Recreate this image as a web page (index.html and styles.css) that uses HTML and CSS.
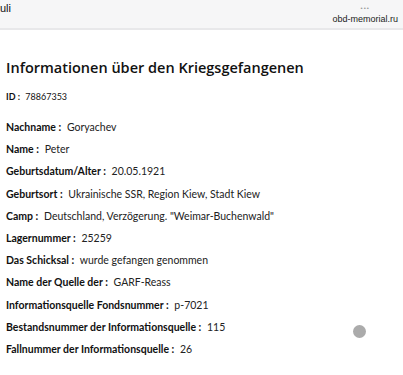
FILE: index.html
```html
<!DOCTYPE html>
<html lang="de">
<head>
<meta charset="utf-8">
<link rel="stylesheet" href="styles.css">
</head>
<body>
<header class="topbar">
  <span class="tab">uli</span>
  <div class="addr">
    <span class="dots">&bull;&bull;&bull;</span>
    <span class="url">obd-memorial.ru</span>
  </div>
</header>
<main class="content">
  <h1 class="title">Informationen über den Kriegsgefangenen</h1>
  <div class="id"><b>ID :</b> 78867353</div>
  <ul class="fields">
    <li><b>Nachname :</b> Goryachev</li>
    <li><b>Name :</b> Peter</li>
    <li><b>Geburtsdatum/Alter :</b> 20.05.1921</li>
    <li><b>Geburtsort :</b> Ukrainische SSR, Region Kiew, Stadt Kiew</li>
    <li><b>Camp :</b> Deutschland, Verzögerung. "Weimar-Buchenwald"</li>
    <li><b>Lagernummer :</b> 25259</li>
    <li><b>Das Schicksal :</b> wurde gefangen genommen</li>
    <li><b>Name der Quelle der :</b> GARF-Reass</li>
    <li><b>Informationsquelle Fondsnummer :</b> p-7021</li>
    <li><b>Bestandsnummer der Informationsquelle :</b> 115</li>
    <li><b>Fallnummer der Informationsquelle :</b> 26</li>
  </ul>
</main>
<div class="scroll-dot"></div>
</body>
</html>
```
FILE: styles.css
```css
html, body {
  margin: 0;
  padding: 0;
  background: #fff;
}
body {
  width: 403px;
  height: 375px;
  overflow: hidden;
  position: relative;
  font-family: Lato, "DejaVu Sans", sans-serif;
  color: #111;
}
.topbar {
  height: 28px;
  background: #f6f6f7;
  border-bottom: 2px solid #e8e8ea;
  display: flex;
  justify-content: space-between;
  align-items: flex-start;
  font-family: "Liberation Sans", Arial, sans-serif;
}
.tab {
  font-size: 11px;
  line-height: 12px;
  padding-top: 2px;
  color: #111;
}
.addr {
  display: flex;
  flex-direction: column;
  align-items: center;
  padding-right: 5px;
}
.dots {
  font-size: 6px;
  line-height: 8px;
  padding-top: 4px;
  color: #999;
  letter-spacing: 1px;
}
.url {
  font-size: 9px;
  line-height: 12px;
  margin-top: 1px;
  color: #222;
}
.content {
  padding: 27px 6px 0;
}
.title {
  margin: 0;
  font-family: "Open Sans", sans-serif;
  font-size: 14.5px;
  line-height: 22px;
  font-weight: 600;
  color: #111;
}
.id {
  margin-top: 12px;
  font-size: 9px;
  line-height: 12px;
  color: #111;
}
.fields {
  list-style: none;
  margin: 13px 0 0;
  padding: 0;
  font-size: 10.5px;
  color: #222;
}
.fields li {
  line-height: 22.2px;
}
b {
  font-weight: bold;
  color: #111;
  margin-right: 3px;
}
.scroll-dot {
  position: absolute;
  left: 353px;
  top: 325px;
  width: 13px;
  height: 13px;
  border-radius: 50%;
  background: #ababab;
}
```
